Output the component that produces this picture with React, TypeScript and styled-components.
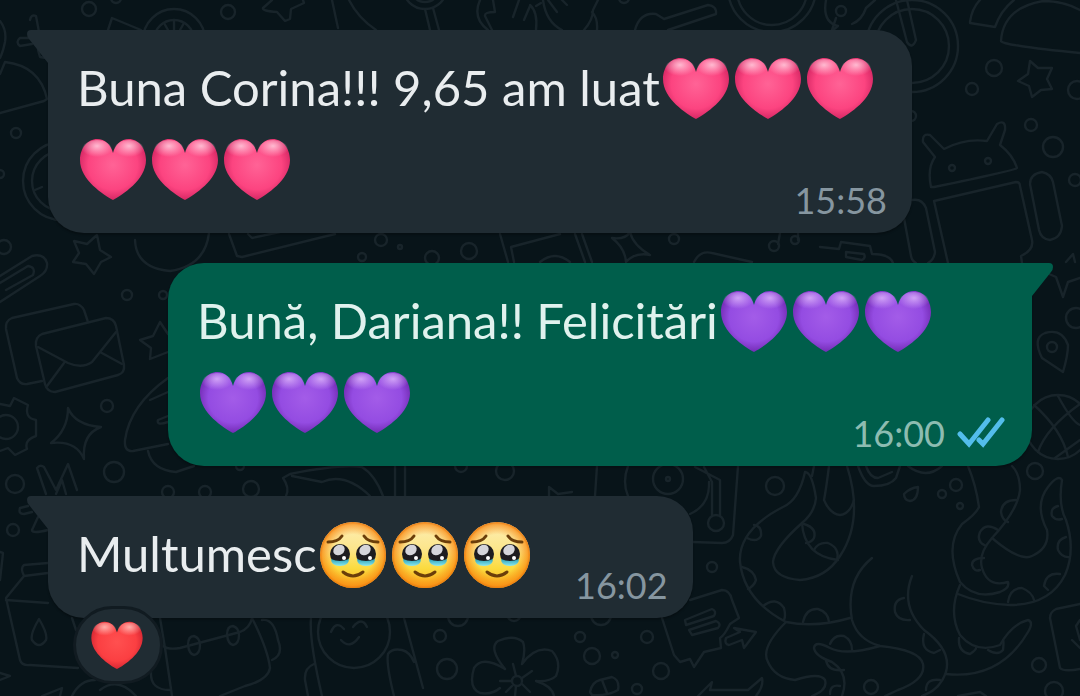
import React from 'react';
import styled, { createGlobalStyle } from 'styled-components';

const GlobalStyle = createGlobalStyle`
  *, *::before, *::after { box-sizing: border-box; }
  body { margin: 0; background: #081419; }
`;

const Screen = styled.div`
  position: relative;
  min-height: 100vh;
  overflow: hidden;
  background: #081419;
  font-family: Lato, "Noto Sans", sans-serif;
`;

const Wallpaper = styled.svg`
  position: absolute;
  inset: 0;
  width: 100%;
  height: 100%;
  fill: none;
  stroke: #18242a;
  stroke-width: 2.4;
  stroke-linecap: round;
  stroke-linejoin: round;
`;

const Thread = styled.main`
  position: relative;
  display: flex;
  flex-direction: column;
  gap: 30px;
  padding: 30px 48px;
`;

const Bubble = styled.article<{ $out?: boolean }>`
  position: relative;
  display: grid;
  width: fit-content;
  max-width: 864px;
  align-self: ${(p) => (p.$out ? 'flex-end' : 'flex-start')};
  padding: 0 25px 11px 29px;
  border-radius: ${(p) => (p.$out ? '36px 0 36px 36px' : '0 36px 36px 36px')};
  background: ${(p) => (p.$out ? '#005e4b' : '#202c33')};
  color: ${(p) => (p.$out ? '#e0f2ee' : '#e9edef')};
  box-shadow: 0 2px 2px rgba(0, 0, 0, 0.25);
`;

const Tail = styled.svg<{ $out?: boolean }>`
  position: absolute;
  top: 0;
  ${(p) => (p.$out ? 'right: -21px;' : 'left: -21px;')}
  width: 22px;
  height: 34px;
  fill: ${(p) => (p.$out ? '#005e4b' : '#202c33')};
`;

const Body = styled.p`
  grid-area: 1 / 1;
  margin: 0;
  padding: 17px 8px 13px 0;
  font-size: 49px;
  line-height: 81px;
`;

const MetaSpace = styled.span<{ $wide?: boolean }>`
  display: inline-block;
  width: ${(p) => (p.$wide ? 188 : 127)}px;
`;

const Meta = styled.footer<{ $out?: boolean }>`
  grid-area: 1 / 1;
  align-self: end;
  justify-self: end;
  display: flex;
  align-items: center;
  gap: 12px;
  color: ${(p) => (p.$out ? '#8dbcb1' : '#8696a0')};
  font-size: 36px;
  line-height: 44px;
`;

const Ticks = styled.svg`
  width: 50px;
  height: 34px;
  fill: none;
  stroke: #53bdeb;
  stroke-width: 5;
  stroke-linecap: round;
`;

const Glyph = styled.svg`
  width: 72px;
  height: 72px;
  vertical-align: -18px;
`;

const Reaction = styled.button`
  position: absolute;
  left: 25px;
  top: 110px;
  display: flex;
  align-items: center;
  justify-content: center;
  width: 90px;
  height: 78px;
  padding: 0 3px 0 0;
  border: 3px solid #111b21;
  border-radius: 39px;
  background: #202c33;
`;

const ReactionGlyph = styled.svg`
  width: 56px;
  height: 56px;
`;

const HiddenDefs = styled.svg`
  position: absolute;
  width: 0;
  height: 0;
`;

type Tone = 'pink' | 'purple' | 'red';

const tones: Record<Tone, { mid: string; core: string; edge: string; shine: string; name: string }> = {
  pink: { core: '#ff6396', mid: '#fc4480', edge: '#cb1f5c', shine: '#ffc0d5', name: '🩷' },
  purple: { core: '#a35ce8', mid: '#944ce2', edge: '#6a22a8', shine: '#d3a6f7', name: '💜' },
  red: { core: '#ff5050', mid: '#fb3f42', edge: '#cb202e', shine: '#ffb3ae', name: '❤️' },
};

const heartPath =
  'M36 67 C27 62 3 47 3 27 C3 15 11 6 20 6 C28 6 34 12 36 20 C38 12 44 6 52 6 C61 6 69 15 69 27 C69 47 45 62 36 67 Z';

function Defs() {
  return (
    <HiddenDefs aria-hidden="true">
      <defs>
        {(Object.keys(tones) as Tone[]).map((t) => (
          <React.Fragment key={t}>
            <radialGradient id={`${t}-body`} gradientUnits="userSpaceOnUse" cx="36" cy="32" r="38">
              <stop offset="0" stopColor={tones[t].core} />
              <stop offset="0.65" stopColor={tones[t].mid} />
              <stop offset="1" stopColor={tones[t].edge} />
            </radialGradient>
            <radialGradient id={`${t}-shine`} cx="0.5" cy="0.3" r="0.55">
              <stop offset="0" stopColor={tones[t].shine} stopOpacity="0.95" />
              <stop offset="1" stopColor={tones[t].shine} stopOpacity="0" />
            </radialGradient>
          </React.Fragment>
        ))}
        <linearGradient id="face-body" x1="0" y1="0" x2="0" y2="1">
          <stop offset="0" stopColor="#fdeeb4" />
          <stop offset="0.4" stopColor="#fce68c" />
          <stop offset="0.7" stopColor="#fbdb3f" />
          <stop offset="1" stopColor="#fbb022" />
        </linearGradient>
        <radialGradient id="face-rim">
          <stop offset="0.62" stopColor="#f98a12" stopOpacity="0" />
          <stop offset="0.92" stopColor="#f98a12" stopOpacity="0.7" />
          <stop offset="1" stopColor="#e8780e" />
        </radialGradient>
        <linearGradient id="face-tear" x1="0" y1="0" x2="0" y2="1">
          <stop offset="0" stopColor="#2b9fb4" />
          <stop offset="1" stopColor="#8ceaf2" />
        </linearGradient>
      </defs>
    </HiddenDefs>
  );
}

function HeartShape({ tone }: { tone: Tone }) {
  return (
    <>
      <path d={heartPath} fill={`url(#${tone}-body)`} />
      <ellipse cx="20" cy="17" rx="15" ry="10" fill={`url(#${tone}-shine)`} />
      <ellipse cx="52" cy="17" rx="15" ry="10" fill={`url(#${tone}-shine)`} />
    </>
  );
}

function Heart({ tone }: { tone: Tone }) {
  return (
    <Glyph viewBox="0 0 72 72" role="img" aria-label={tones[tone].name}>
      <HeartShape tone={tone} />
    </Glyph>
  );
}

function Eye({ x }: { x: number }) {
  return (
    <g transform={`translate(${x} 36)`}>
      <circle r="10" fill="#1d1c20" />
      <path d="M-9 5 Q0 9 9 5 Q9 12 0 12 Q-9 12 -9 5Z" fill="url(#face-tear)" />
      <ellipse cx="-1" cy="-4" rx="6" ry="5" transform="rotate(-35 -1 -4)" fill="#d5d5da" />
      <circle cx="4" cy="4" r="2" fill="#fff" />
    </g>
  );
}

function TearyFace() {
  return (
    <Glyph viewBox="0 0 72 72" role="img" aria-label="🥹">
      <circle cx="36" cy="37" r="33" fill="url(#face-body)" />
      <circle cx="36" cy="37" r="33" fill="url(#face-rim)" />
      <Eye x={23} />
      <Eye x={49} />
      <g fill="none" stroke="#6b3e0a" strokeLinecap="round">
        <path d="M11 24 Q21 24 25 18" strokeWidth="3" />
        <path d="M61 24 Q51 24 47 18" strokeWidth="3" />
        <path d="M26 54 Q36 62 46 54" strokeWidth="3" />
      </g>
    </Glyph>
  );
}

function BubbleTail({ out }: { out?: boolean }) {
  return (
    <Tail $out={out} viewBox="0 0 22 34" aria-hidden="true">
      <path
        d="M22 0 H4 Q0 0 0 4 Q0 7 2 9 L21 33 H22 Z"
        transform={out ? 'translate(22 0) scale(-1 1)' : undefined}
      />
    </Tail>
  );
}

const circles: [number, number, number][] = [
  [89, 9, 7], [116, -2, 5], [228, 12, 7], [16, 133, 5], [0, 174, 4], [624, -2, 5], [841, 11, 5],
  [994, 68, 8], [972, 89, 6], [1031, 125, 6], [1053, 147, 10], [1075, 180, 6], [1077, 90, 9], [911, 116, 5],
  [952, 168, 3], [988, 161, 3], [4, 247, 7], [127, 295, 5], [163, 295, 4], [107, 406, 6], [114, 472, 10],
  [15, 484, 9], [381, 240, 6], [400, 247, 2], [362, 257, 4], [432, 258, 7], [469, 251, 8], [674, 239, 5],
  [774, 246, 5], [795, 240, 4], [1076, 318, 10], [1052, 347, 5], [1035, 471, 8], [461, 466, 6], [505, 471, 9],
  [251, 489, 8], [205, 492, 6], [168, 492, 6], [240, 466, 4], [668, 479, 15], [668, 479, 2], [13, 530, 6],
  [775, 486, 9], [956, 485, 6], [942, 494, 4], [960, 506, 3], [716, 523, 8], [712, 567, 5], [871, 687, 7],
  [1039, 665, 7], [1054, 691, 9], [440, 636, 6], [447, 669, 10], [458, 616, 10], [514, 614, 7],
  [580, 637, 5], [601, 615, 10], [592, 656, 8], [615, 655, 3], [647, 637, 6], [661, 671, 8], [637, 689, 5],
  [62, 181, 39], [62, 181, 30], [174, 40, 31], [174, 40, 20], [425, -13, 22], [425, -13, 15], [772, -10, 35],
  [772, -12, 44], [912, 46, 46], [912, 46, 37], [6, 427, 12], [1058, 427, 32], [354, 632, 36], [517, 681, 5],
];

const doodles = [
  // top edge
  'M0 21 Q7 30 5 42 Q3 52 0 58', 'M30 20 Q31 14 36 16 L39 32', 'M36 38 L20 38 Q15 42 20 46 L32 44', 'M38 50 L40 57 L46 58',
  'M0 74 L5 62 Q40 66 47 99 L44 101 L0 113', 'M35 190 L42 187', 'M108 30 L112 18 L141 30',
  'M174 20 V30 M164 23 L168 30 M184 23 L180 30', 'M272 0 L263 8 Q262 11 277 12 L285 21 L290 19 L291 9 L304 3 L303 0',
  'M332 0 L338 28', 'M349 0 Q358 18 376 30', 'M425 9 L430 30 M433 8 L439 30',
  'M480 0 Q472 18 488 30', 'M493 0 L495 12 Q484 12 485 16 L492 30', 'M519 0 L513 17 M530 6 L524 20',
  'M530 5 Q538 12 536 30 M536 6 L541 3', 'M543 0 Q546 22 562 30 M548 0 L557 12 M562 0 L567 5',
  'M598 0 L593 10 Q593 20 584 30 M592 12 Q598 18 597 30',
  'M635 30 Q640 12 656 14 L664 19 L708 5 Q717 6 716 14 L668 30',
  'M826 0 Q822 22 838 26 L833 30 M852 24 Q862 20 866 8 L875 0 M836 18 L832 30',
  'M896 0 L907 42 Q912 50 916 40 L907 0', 'M970 22 Q972 8 980 0 M970 23 L995 27 Q1001 10 1014 0',
  'M1001 41 Q1003 8 1043 1 Q1064 1 1080 10 M1001 41 Q1000 45 1080 53',
  'M1030 61 L1038 68 L1052 68 L1047 79 L1052 89 L1041 90 L1032 97 L1029 86 L1018 81 L1028 74 Z',
  // robot
  'M931 187 Q927 168 935 157 L923 142 Q922 133 930 135 L944 149 Q965 138 987 141 L997 124 Q1006 119 1005 130 L1000 145 Q1013 155 1017 168 Q1016 170 934 187 Z',
  'M948 263 L934 201 L1016 182 Q1020 182 1020 186 L1032 240 Q1034 250 1021 256 L1022 263',
  'M1030 184 Q1030 174 1042 172 Q1051 174 1053 182 L1062 226 Q1061 238 1050 240 Q1041 239 1039 230 Z',
  'M912 200 Q922 198 926 208 L935 252 Q934 260 928 263 M904 218 L911 256 Q912 261 916 263',
  'M820 247 L839 249 L841 242 L870 246 L872 254 Q890 254 893 263', 'M846 252 L864 254 Q866 258 862 260 L846 257 Z',
  'M1066 262 L1073 254 L1075 262',
  // left side
  'M97 235 L100 250 L111 257 L101 262 L94 274 L86 264 L73 262 L79 253 L74 241 L87 244 Z',
  'M0 276 L32 256 Q44 253 47 263 Q48 271 40 276 L0 302', 'M0 283 L28 266 Q36 267 33 275 L6 290',
  'M135 240 Q136 268 170 271 Q205 266 209 233',
  'M160 322 L153 336 L140 340 L151 348 L150 359 L168 352 M160 322 L168 334',
  'M88 322 L84 310 Q80 303 74 304 L12 318 Q5 321 6 329 L17 378 Q20 385 27 384 L42 381',
  'M42 334 L106 318 Q114 318 116 326 L124 365 Q125 373 118 375 L55 392 Q47 392 45 384 L36 346 Q35 337 42 334 Z',
  'M38 347 L68 363 Q82 369 92 362 L116 332 M64 363 L47 386 M100 352 L122 364',
  'M0 404 L10 406 L14 398 L28 405 Q24 418 36 420 L36 436 Q24 440 27 449 L15 455 L8 448 L0 451',
  'M68 408 Q75 425 101 427 Q82 434 84 459 Q76 440 51 443 Q68 430 68 408 Z',
  'M168 378 Q130 405 125 440 Q124 452 133 451 L168 444 M150 400 L168 392 M168 416 L158 420 Q156 426 168 422 M148 451 Q152 470 176 472 L194 466',
  'M46 494 L37 468 Q40 464 44 467 L56 490 L68 464 L77 490 M56 494 L62 480 L66 494',
  // between the bubbles
  'M229 234 L237 256 L242 257 L335 234 M248 234 L252 238 L280 232',
  'M500 234 L508 262 M514 262 L511 247 L560 234 M575 234 L585 262 M582 234 L592 262 M540 262 Q555 250 570 262',
  'M612 238 Q625 240 630 232 Q633 245 650 255 Q635 252 626 262 Q625 248 612 238', 'M694 262 Q700 250 712 253 L752 262',
  'M778 244 L780 233 M798 240 V233',
  'M286 496 Q290 488 283 478 L290 474 Q340 464 362 467 Q375 475 383 496 M292 476 L322 482 Q345 472 370 496',
  'M395 466 V496 M405 466 V496 M597 466 L595 496 M549 496 V487 L558 494 L572 492 M628 466 Q622 482 628 496',
  'M1040 270 L1056 277 L1063 297 L1068 282 L1080 278',
  'M1063 372 L1042 358 Q1032 338 1045 333 Q1062 328 1068 345 Q1068 355 1063 372 Z',
  'M1034 405 Q1062 430 1068 457 M1058 396 Q1072 422 1080 425 M1080 404 Q1046 428 1038 452 M1080 440 L1055 458',
  // disc and frame
  'M695 467 L720 480 V516 M704 467 L712 482 V516 M738 466 L733 535 Q730 543 722 543 L693 542 M709 482 Q710 505 690 514',
  'M858 466 Q865 486 874 486 Q890 486 896 478 L900 466 M866 466 Q870 478 878 478 L892 472 M908 466 Q926 480 942 466',
  'M904 494 Q910 488 918 487 Q918 500 910 501 Q904 500 904 494 Z',
  // octopus
  'M805 472 Q812 472 816 498 Q815 512 802 523 Q774 548 773 562 Q774 578 800 580 Q826 578 840 556 Q864 520 847 466',
  'M805 472 Q799 500 783 507 Q738 530 740 562 Q744 600 786 622 Q816 628 850 618',
  'M824 500 Q830 514 840 515 Q850 514 854 500 M824 500 Q826 490 829 466 M814 466 L812 476',
  'M802 523 Q804 556 838 560', 'M872 558 Q845 580 852 620 Q858 640 880 646 Q920 650 923 664 Q926 680 898 690 L885 696',
  'M912 576 Q900 606 924 630 Q952 650 946 672 Q940 690 922 696',
  'M786 622 Q760 648 768 662 Q775 678 795 680 Q820 672 825 680 Q828 690 812 696',
  'M880 646 Q845 656 830 648 Q815 640 814 648 Q815 656 832 662 Q850 674 842 696',
  'M968 466 Q976 485 979 507 Q976 514 962 524 Q944 546 960 582 Q975 600 1000 592 Q1010 588 1008 582 Q988 588 982 568 Q978 554 992 538 Q1018 510 1020 490 Q1020 474 1012 466',
  'M992 538 Q1020 562 1032 556 Q1050 548 1047 530 Q1034 505 1048 487 Q1058 474 1062 480 Q1058 505 1066 520 Q1076 550 1065 575 Q1050 605 1010 605 Q982 604 958 594',
  'M960 585 Q948 612 960 635 Q976 654 1000 645 Q1012 624 1028 620 Q1034 622 1028 632 Q1000 680 946 674',
  'M754 525 Q762 526 761 536 Q757 543 747 538 M742 567 Q754 570 756 580 Q754 586 748 589 M763 606 Q776 596 784 608 Q786 616 784 620 M803 622 Q806 608 818 609 Q828 612 829 622',
  'M804 524 Q817 528 814 538 Q812 542 806 543 M814 550 Q818 542 828 543 Q840 548 837 560 M904 598 Q893 600 895 612 Q898 621 910 620 M924 634 Q920 650 934 653 L940 650',
  'M830 644 Q834 634 844 636 Q852 640 852 650 M826 660 Q828 672 844 670 M926 690 Q926 678 940 680 M830 694 Q830 684 840 686',
  'M1016 500 Q1002 500 1001 512 Q1002 520 1008 522 M998 530 Q986 522 980 532 Q976 542 986 546 M984 558 Q972 558 972 565 Q974 572 980 570',
  'M1058 506 Q1050 508 1052 516 Q1056 521 1062 519 M1066 537 Q1056 540 1058 550 Q1062 558 1070 557 M1060 574 Q1046 572 1044 586 L1048 590 M1008 602 Q1010 588 1022 588 Q1032 592 1034 600',
  'M959 638 Q958 652 970 654 Q976 650 976 648 M988 650 Q998 656 1003 650 Q1004 642 1003 640',
  'M1080 604 L1056 609 Q1050 612 1050 618 L1060 668 Q1064 672 1080 669 M1080 620 L1076 626 L1080 640 M1072 640 L1080 648',
  // speech card and arrow
  'M690 600 L722 590 Q730 590 732 600 L739 618 L730 624 Q724 636 720 638 L721 648 L704 652 L694 667 L690 659 L680 662 L674 655 L662 618',
  'M685 620 L712 609 Q717 611 714 616 L686 625 Z M689 630 L716 621 Q722 624 718 628 L692 635 Z',
  'M726 638 L740 632 L734 628 L756 632 L744 648 L742 640 L729 645 Q724 644 726 638 Z',
  'M698 696 L712 682 L710 690 L748 690 L762 678 Q764 686 756 696', 'M958 696 L980 692 L986 696',
  // carton
  'M48 563 L24 565 Q20 568 24 576 L6 598 L20 660 Q22 666 30 665 L78 668 M6 600 L48 603 M24 576 L48 573',
  'M39 619 Q30 634 32 640 Q39 650 46 640 Q48 634 39 619 Z M72 618 L76 630 M0 552 L3 553 L0 580 M0 673 L10 676 L0 680',
  'M28 506 L20 508 Q18 514 24 514 L32 512 M38 517 L32 530 Q32 534 48 530 M42 696 L62 688 L60 696 M72 696 Q80 680 95 680 M100 690 Q118 676 136 696',
  // bag
  'M160 618 L165 648 L172 696 M163 646 Q168 650 180 648 L240 632 Q250 628 252 618 Q268 650 270 668 Q268 680 245 686 L220 696',
  'M188 645 Q188 636 194 636 Q200 638 200 645 Q200 654 194 655 Q189 654 188 645 Z M227 635 Q227 626 233 626 Q239 628 239 635 Q239 644 233 645 Q228 644 227 635 Z',
  'M262 620 Q274 618 278 640 Q284 655 272 660 M151 672 Q150 690 170 690',
  // bear figure
  'M311 618 Q309 640 322 696 M404 618 L423 688 M388 654 Q392 648 402 650 Q410 652 414 662 M388 654 Q386 664 394 696 M314 664 Q304 668 305 680 L308 696',
  'M331 632 Q336 620 344 629 M353 627 Q362 616 367 627 M341 640 Q350 650 359 637',
  // blossom
  'M505 669 Q488 648 498 641 Q514 634 523 642 Q526 650 522 664 Q536 645 552 651 Q562 662 556 676 Q550 682 536 681 Q552 686 554 696',
  'M505 669 Q482 655 474 668 Q468 688 480 693 Q492 695 500 688 M500 681 L512 681 M513 664 L516 676 M532 671 L522 678 M522 684 L530 692 M512 686 L506 692 M516 686 L515 696',
  'M590 692 Q592 682 600 680 L612 677 Q620 680 618 690 Q608 696 592 695 Z M602 680 L607 693',
];

function Doodles() {
  return (
    <Wallpaper viewBox="0 0 1080 696" preserveAspectRatio="xMidYMin slice" aria-hidden="true">
      {circles.map(([x, y, r], i) => (
        <circle key={i} cx={x} cy={y} r={r} />
      ))}
      {doodles.map((d) => (
        <path key={d} d={d} />
      ))}
    </Wallpaper>
  );
}

const three = [0, 1, 2];
const six = [0, 1, 2, 3, 4, 5];

export default function App() {
  return (
    <>
      <GlobalStyle />
      <Defs />
      <Screen>
        <Doodles />
        <Thread>
          <Bubble>
            <BubbleTail />
            <Body>
              Buna Corina!!! 9,65 am luat
              {six.map((i) => (
                <Heart key={i} tone="pink" />
              ))}
              <MetaSpace />
            </Body>
            <Meta>
              <time>15:58</time>
            </Meta>
          </Bubble>

          <Bubble $out>
            <BubbleTail out />
            <Body>
              Bună, Dariana!! Felicitări
              {six.map((i) => (
                <Heart key={i} tone="purple" />
              ))}
              <MetaSpace $wide />
            </Body>
            <Meta $out>
              <time>16:00</time>
              <Ticks viewBox="0 0 50 34" role="img" aria-label="Read">
                <path d="M3 18 L12 28 L31 4 M22 24 L26 28 L45 4" />
              </Ticks>
            </Meta>
          </Bubble>

          <Bubble>
            <BubbleTail />
            <Body>
              Multumesc
              {three.map((i) => (
                <TearyFace key={i} />
              ))}
              <MetaSpace />
            </Body>
            <Meta>
              <time>16:02</time>
            </Meta>
            <Reaction type="button" aria-label="❤️">
              <ReactionGlyph viewBox="0 0 72 72" aria-hidden="true">
                <HeartShape tone="red" />
              </ReactionGlyph>
            </Reaction>
          </Bubble>
        </Thread>
      </Screen>
    </>
  );
}
